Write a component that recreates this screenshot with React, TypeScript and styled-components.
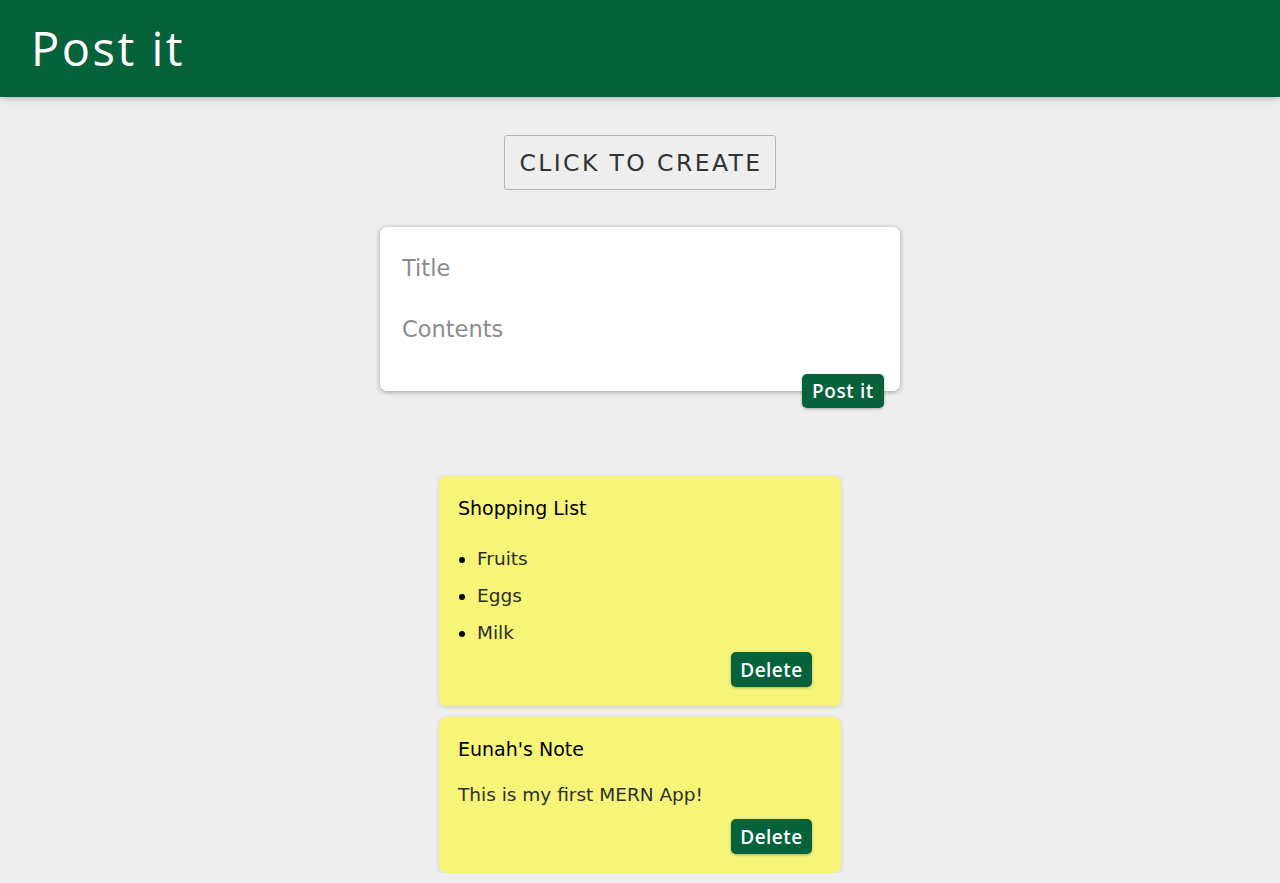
import React from "react";
import styled, { createGlobalStyle } from "styled-components";

const Global = createGlobalStyle`
  html, body { margin: 0; padding: 0; }
  body {
    background: #eeeeee;
    font-family: "DejaVu Sans", "Open Sans", sans-serif;
    overflow: hidden;
  }
`;

const Header = styled.header`
  height: 97px;
  background: #06623b;
  box-shadow: 0 0 8px rgba(0, 0, 0, 0.35);
  display: flex;
  align-items: center;
  padding: 0 31px;
  box-sizing: border-box;
`;

const Logo = styled.h1`
  margin: 0;
  color: #ffffff;
  font-family: "Open Sans", sans-serif;
  font-weight: 500;
  font-size: 47px;
  letter-spacing: 2.5px;
  padding-bottom: 2px;
`;

const Main = styled.main`
  display: flex;
  flex-direction: column;
  align-items: center;
`;

const CreateToggle = styled.button`
  margin-top: 38px;
  height: 55px;
  width: 272px;
  background: #eeeeee;
  border: 1px solid #b3b3b3;
  border-radius: 3px;
  color: #333333;
  font-family: "DejaVu Sans", sans-serif;
  font-weight: 400;
  font-size: 23.5px;
  letter-spacing: 2.4px;
  padding: 0 0 0 2px;
`;

const FormCard = styled.form`
  position: relative;
  margin-top: 37px;
  width: 520px;
  height: 164px;
  box-sizing: border-box;
  background: #ffffff;
  border-radius: 7px;
  box-shadow: 0 1px 5px rgba(0, 0, 0, 0.35);
  padding: 27px 22px 0;
  display: flex;
  flex-direction: column;
  gap: 34px;
`;

const Field = styled.input`
  border: none;
  outline: none;
  padding: 0;
  height: 27px;
  font-family: "DejaVu Sans", sans-serif;
  font-weight: 400;
  font-size: 22.5px;
  color: #333;
  background: transparent;
  &::placeholder { color: #8c8c8c; }
`;

const PostButton = styled.button`
  position: absolute;
  right: 16px;
  bottom: -17px;
  width: 82px;
  height: 34px;
  background: #06623b;
  color: #ffffff;
  border: none;
  border-radius: 5px;
  box-shadow: 0 1px 3px rgba(0, 0, 0, 0.3);
  font-family: "Open Sans", sans-serif;
  font-weight: 600;
  font-size: 19px;
  letter-spacing: 0.6px;
  padding: 0;
`;

const Notes = styled.section`
  margin-top: 85px;
  display: flex;
  flex-direction: column;
  gap: 11px;
`;

const NoteCard = styled.article`
  width: 402px;
  box-sizing: border-box;
  background: #f6f578;
  border-radius: 7px;
  box-shadow: 0 1px 4px rgba(0, 0, 0, 0.15);
  padding: 21px 29px 19px 19px;
  display: flex;
  flex-direction: column;
`;

const NoteTitle = styled.h2`
  margin: 0;
  font-family: "DejaVu Sans", sans-serif;
  font-weight: 400;
  font-size: 19px;
  line-height: 22px;
  color: #000;
`;

const NoteText = styled.p`
  margin: 24px 0 0;
  font-family: "DejaVu Sans", sans-serif;
  font-weight: 400;
  font-size: 18.5px;
  line-height: 22px;
  color: #2e2e2e;
`;

const NoteList = styled.ul`
  margin: 29px 0 0;
  padding-left: 19px;
  display: flex;
  flex-direction: column;
  gap: 15px;
`;

const NoteItem = styled.li`
  font-family: "DejaVu Sans", sans-serif;
  font-weight: 400;
  font-size: 18.5px;
  line-height: 22px;
  color: #2e2e2e;
  &::marker { color: #000; }
`;

const DeleteButton = styled.button<{ $gap: number }>`
  align-self: flex-end;
  margin-top: ${(p) => p.$gap}px;
  width: 81px;
  height: 35px;
  background: #06623b;
  color: #ffffff;
  border: none;
  border-radius: 5px;
  box-shadow: 0 1px 3px rgba(0, 0, 0, 0.3);
  font-family: "Open Sans", sans-serif;
  font-weight: 600;
  font-size: 19px;
  letter-spacing: 0.5px;
  padding: 0;
`;

export default function App() {
  return (
    <>
      <Global />
      <Header>
        <Logo>Post it</Logo>
      </Header>
      <Main>
        <CreateToggle type="button">CLICK TO CREATE</CreateToggle>
        <FormCard onSubmit={(e) => e.preventDefault()}>
          <Field placeholder="Title" />
          <Field placeholder="Contents" />
          <PostButton type="submit">Post it</PostButton>
        </FormCard>
        <Notes>
          <NoteCard>
            <NoteTitle>Shopping List</NoteTitle>
            <NoteList>
              <NoteItem>Fruits</NoteItem>
              <NoteItem>Eggs</NoteItem>
              <NoteItem>Milk</NoteItem>
            </NoteList>
            <DeleteButton $gap={8} type="button">Delete</DeleteButton>
          </NoteCard>
          <NoteCard>
            <NoteTitle>Eunah's Note</NoteTitle>
            <NoteText>This is my first MERN App!</NoteText>
            <DeleteButton $gap={13} type="button">Delete</DeleteButton>
          </NoteCard>
        </Notes>
      </Main>
    </>
  );
}
